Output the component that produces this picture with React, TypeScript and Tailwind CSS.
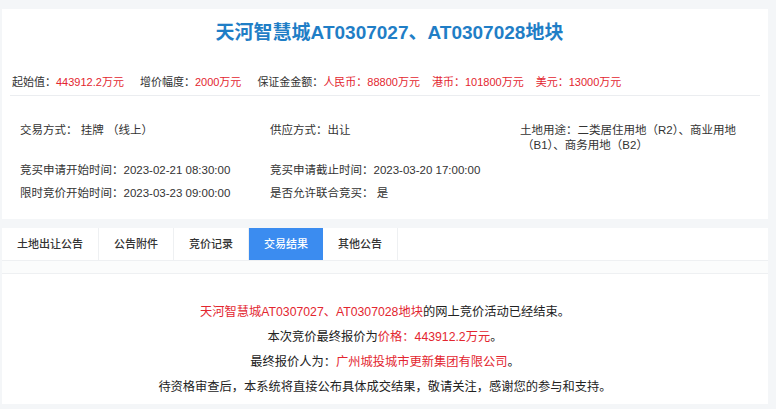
import React from "react";

const FONT = { fontFamily: '"Liberation Sans", "Noto Sans CJK SC", sans-serif' };

function Red({ children }: { children: React.ReactNode }) {
  return <span className="text-[#e3262f]">{children}</span>;
}

const tabs = ["土地出让公告", "公告附件", "竞价记录", "交易结果", "其他公告"];

export default function App() {
  return (
    <div className="min-h-[409px] w-[776px] bg-[#f4f6f8] pt-[9px] pl-[2px] pr-[8px] pb-[6px] text-[#333]" style={FONT}>
      {/* Top card */}
      <div className="bg-white">
        <h1 className="pt-[12px] pl-[9px] text-center text-[19px] font-semibold leading-[24px] text-[#1f7ec6]">
          天河智慧城AT0307027、AT0307028地块
        </h1>
        <div className="mx-[8px] mt-[29px] border-b border-[#ebedf0] pb-[5px] pl-[2px] text-[11px] leading-[16px]">
          <span className="mr-[16px]">
            起始值：<Red>443912.2万元</Red>
          </span>
          <span className="mr-[16px]">
            增价幅度：<Red>2000万元</Red>
          </span>
          <span>
            保证金金额：<Red>人民币：88800万元</Red>
            <Red>
              <span className="ml-[12px]">港币：101800万元</span>
            </Red>
            <Red>
              <span className="ml-[12px]">美元：13000万元</span>
            </Red>
          </span>
        </div>
        <div className="grid grid-cols-[250px_250px_1fr] pl-[18px] pt-[26px] pb-[18px] text-[11.5px] leading-[16px]">
          <div className="h-[40px]">交易方式： 挂牌 （线上）</div>
          <div>供应方式：出让</div>
          <div className="pt-[1px] leading-[15px]">
            土地用途：二类居住用地（R2）、商业用地
            <br />
            <span className="pl-[2px]">（B1）、商务用地（B2）</span>
          </div>
          <div className="h-[23px]">竞买申请开始时间：2023-02-21 08:30:00</div>
          <div>竞买申请截止时间：2023-03-20 17:00:00</div>
          <div></div>
          <div>限时竞价开始时间：2023-03-23 09:00:00</div>
          <div>是否允许联合竞买： 是</div>
          <div></div>
        </div>
      </div>

      {/* Tabs */}
      <div className="mt-[9px] flex h-[33px] border-b border-[#eef0f2] bg-white text-[11px] font-medium">
        {tabs.map((t) => (
          <div
            key={t}
            className={
              t === "交易结果"
                ? "flex items-center bg-[#3b8cf0] px-[15px] text-white"
                : "flex items-center border-r border-[#eef0f2] px-[15px] text-[#333]"
            }
          >
            {t}
          </div>
        ))}
      </div>
      <div className="h-[12px] bg-[#fbfcfc]"></div>

      {/* Content */}
      <div className="border-t border-[#eef0f2] bg-white pt-[26px] pb-[4px] text-center text-[12.25px] leading-[25px] text-[#222]">
        <p>
          <Red>天河智慧城AT0307027、AT0307028地块</Red>的网上竞价活动已经结束。
        </p>
        <p>
          本次竞价最终报价为<Red>价格：443912.2万元</Red>。
        </p>
        <p>
          最终报价人为：<Red>广州城投城市更新集团有限公司</Red>。
        </p>
        <p>待资格审查后，本系统将直接公布具体成交结果，敬请关注，感谢您的参与和支持。</p>
      </div>
    </div>
  );
}
